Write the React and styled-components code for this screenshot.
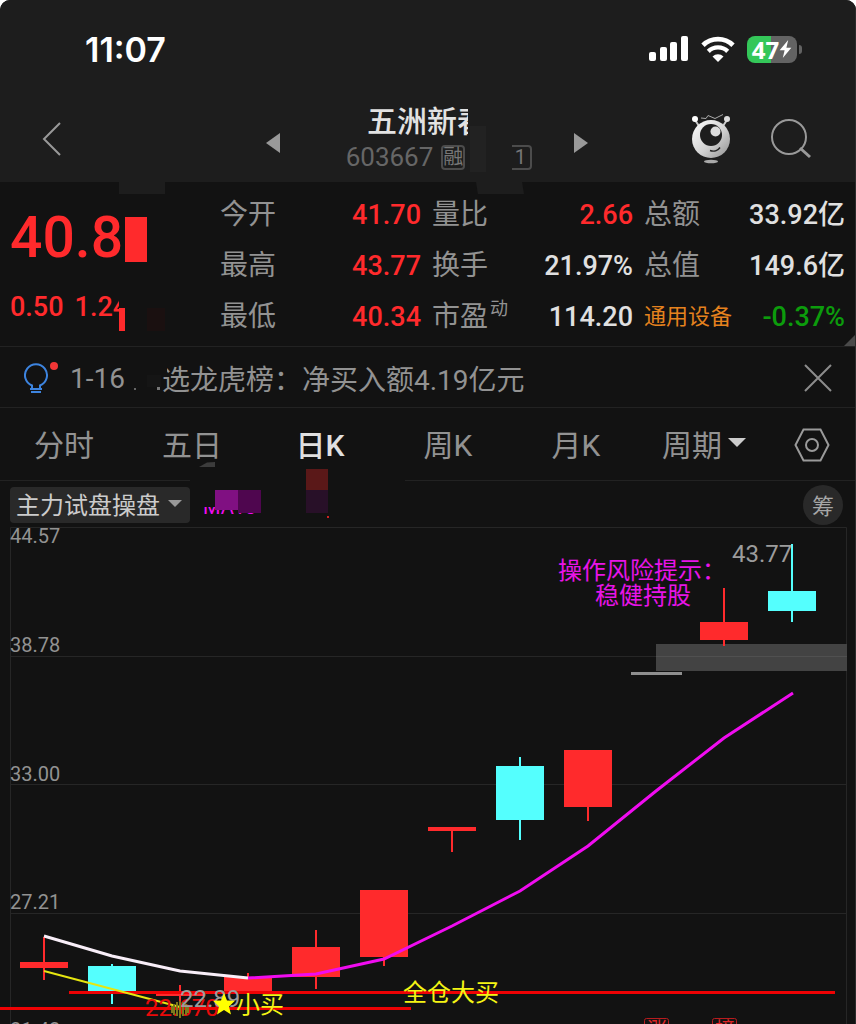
import styled, { createGlobalStyle } from "styled-components";

const QUOTES = [
  { label: "今开", value: "41.70", tone: "up" },
  { label: "量比", value: "2.66", tone: "up" },
  { label: "总额", value: "33.92亿" },
  { label: "最高", value: "43.77", tone: "up" },
  { label: "换手", value: "21.97%" },
  { label: "总值", value: "149.6亿" },
  { label: "最低", value: "40.34", tone: "up" },
  { label: "市盈", sup: "动", value: "114.20" },
  { label: "通用设备", value: "-0.37%", tone: "down", sector: true },
];

const TABS = ["分时", "五日", "日K", "周K", "月K"];

const RED = "#ff2a2c";
const CYAN = "#54fffe";

// x is the centre of the candle
const CANDLES = [
  { x: 44, high: 410, open: 435, close: 441, low: 453, color: RED },
  { x: 112, high: 437, open: 439, close: 464, low: 477, color: CYAN },
  { x: 180, high: 458, open: 466, close: 469, low: 475, color: RED },
  { x: 248, high: 446, open: 450, close: 465, low: 465, color: RED },
  { x: 316, high: 403, open: 420, close: 450, low: 462, color: RED },
  { x: 384, high: 363, open: 363, close: 430, low: 439, color: RED },
  { x: 452, high: 300, open: 300, close: 304, low: 325, color: RED },
  { x: 520, high: 230, open: 239, close: 293, low: 313, color: CYAN },
  { x: 588, high: 223, open: 223, close: 280, low: 294, color: RED },
  { x: 724, high: 61, open: 95, close: 113, low: 119, color: RED },
  { x: 792, high: 17, open: 64, close: 84, low: 95, color: CYAN },
];

const AXIS = [
  { y: 16, text: "44.57" },
  { y: 125, text: "38.78" },
  { y: 254, text: "33.00" },
  { y: 382, text: "27.21" },
  { y: 510, text: "21.42" },
];

const SignalIcon = () => (
  <svg width="40" height="26" viewBox="0 0 40 26" fill="#fff">
    <rect x="0" y="16" width="7" height="9" rx="2" />
    <rect x="11" y="11" width="7" height="14" rx="2" />
    <rect x="21" y="6" width="7" height="19" rx="2" />
    <rect x="32" y="0" width="7" height="25" rx="2" />
  </svg>
);

const WifiIcon = () => (
  <svg width="34" height="26" viewBox="0 0 34 26" fill="none" stroke="#fff">
    <path d="M2 9.200a21.500 21.500 0 0 1 30 0" strokeWidth="4.800" />
    <path d="M7.300 15.300a14 14 0 0 1 19.400 0" strokeWidth="4.400" />
    <path d="M17 26l-5.500-5.500a8 8 0 0 1 11 0z" fill="#fff" stroke="none" />
  </svg>
);

const BackIcon = () => (
  <svg width="20" height="34" viewBox="0 0 20 34" fill="none">
    <path d="M18 1L2 17l16 16" stroke="#999" strokeWidth="2" />
  </svg>
);

const RobotIcon = () => (
  <svg width="40" height="50" viewBox="0 0 40 50" fill="none">
    <defs>
      <linearGradient id="robotBody" x1="0" y1="0" x2="1" y2="1">
        <stop offset="0" stopColor="#fff" />
        <stop offset="0.55" stopColor="#d2d2d2" />
        <stop offset="1" stopColor="#8e8e8e" />
      </linearGradient>
    </defs>
    <path d="M4 6l4 6M36 6l-4 6" stroke="#ccc" strokeWidth="2" />
    <circle cx="4" cy="5" r="3" fill="#fff" />
    <circle cx="36" cy="5" r="3" fill="#ddd" />
    <path d="M10 4l5 .5 2-3 7 3 8-4" stroke="#aaa" />
    <circle cx="20" cy="25" r="19" fill="url(#robotBody)" />
    <circle cx="20" cy="21" r="11" fill="#1d1d1d" />
    <circle cx="24.500" cy="17.500" r="5" fill="#dcdcdc" />
    <path d="M19 36.500c4 1.500 8 0 10-3" stroke="#222" strokeWidth="1.500" />
    <ellipse cx="20" cy="47.500" rx="7" ry="1.800" fill="#aaa" />
  </svg>
);

const SearchIcon = () => (
  <svg width="42" height="42" viewBox="0 0 42 42" fill="none">
    <circle cx="19" cy="19" r="17" stroke="#999" strokeWidth="2" />
    <path d="M30 30l10 9" stroke="#999" strokeWidth="3" />
  </svg>
);

const BulbIcon = () => (
  <svg width="34" height="34" viewBox="0 0 34 34" fill="none">
    <path
      d="M8 27v-2.500a11 11 0 1 1 8 0V27"
      stroke="#3d84df"
      strokeWidth="2"
    />
    <path d="M6 28h12M7 31h10" stroke="#3d84df" strokeWidth="2" />
    <circle cx="30" cy="5" r="4" fill="#f23636" />
  </svg>
);

const CloseIcon = () => (
  <svg width="28" height="28" viewBox="0 0 28 28">
    <path d="M1 1l26 26M27 1L1 27" stroke="#8c8c8c" strokeWidth="2" />
  </svg>
);

const SettingsIcon = () => (
  <svg width="36" height="34" viewBox="0 0 36 34" fill="none">
    <path
      d="M9.500 1.500h17L34.500 17l-8 15.500h-17L1.500 17z"
      stroke="#9a9a9a"
      strokeWidth="2"
    />
    <circle cx="18" cy="17" r="6" stroke="#9a9a9a" strokeWidth="2" />
  </svg>
);

const Candle = ({ x, high, open, close, low, color }) => (
  <g fill={color}>
    <rect x={x - 1} y={high} width="2" height={low - high} />
    <rect x={x - 24} y={open} width="48" height={close - open} />
  </g>
);

const StarGlyph = ({ x, y }) => (
  <path
    transform={`translate(${x} ${y})`}
    d="M0-11L3-3.500 11-3.200 5 2.500 7 10.500 0 6-7 10.500-5 2.500-11-3.200-3-3.500z"
    fill="#ff0"
  />
);

const Chart = () => (
  <ChartSvg viewBox="0 0 856 497" role="img" aria-label="日K">
    <g stroke="#262626" fill="none">
      <path d="M10.500 497V.5h836V497" />
      <path d="M10 129.500h837M10 257.500h837M10 386.500h837" />
    </g>
    {AXIS.map(({ y, text }) => (
      <AxisText key={text} x="10" y={y}>
        {text}
      </AxisText>
    ))}

    <rect x="656" y="117" width="191" height="27" fill="#434343" />
    <path d="M656 129.500h191" stroke="#505050" />
    <rect x="631" y="145" width="51" height="3" fill="#8f8f8f" />
    {CANDLES.map((candle) => (
      <Candle key={candle.x} {...candle} />
    ))}

    <path d="M69 465.500h766M0 481.500h411" stroke="#ee0204" strokeWidth="3" />
    <path d="M44 444l68 18 68 18" stroke="#e6e610" strokeWidth="2" fill="none" />
    <path
      d="M44 409l68 20 68 15 68 7"
      stroke="#f8eef8"
      strokeWidth="3"
      fill="none"
    />
    <path
      d="M248 451l68-4 68-15 68-33 68-35 68-45 68-55 68-53 69-45"
      stroke="#f00cf0"
      strokeWidth="3"
      fill="none"
    />

    <ChartText x="145" y="489" $color="#e80a0a">22.670</ChartText>
    <path
      d="M172 479v7M174 477v11M177 475v14M180 474v17M183 475v14M186 477v11M188 479v7"
      stroke="#7d7a1c"
      strokeWidth="2"
    />
    <ChartText x="180" y="480" $color="#9c9c9c">22.89</ChartText>
    <StarGlyph x={224} y={477} />
    <ChartText x="236" y="486" $color="#f4f414">小买</ChartText>
    <ChartText x="403" y="474" $color="#f4f414">全仓大买</ChartText>
    <ChartText x="558" y="52" $color="#e814e8">操作风险提示：</ChartText>
    <ChartText x="595" y="77" $color="#e814e8">稳健持股</ChartText>
    <ChartText x="732" y="35" $color="#9c9c9c">43.77</ChartText>

    <g fill="none" stroke="#b81c1e">
      <rect x="644.500" y="491.500" width="24" height="24" rx="2" />
      <rect x="712.500" y="491.500" width="24" height="24" rx="2" />
    </g>
    <MarkText x="647" y="510">涨</MarkText>
    <MarkText x="715" y="510">榜</MarkText>
  </ChartSvg>
);

const App = () => {
  return (
    <>
      <GlobalStyle />
      <Page>
        <StatusBar>
          <Clock>11:07</Clock>
          <StatusIcons>
            <SignalIcon />
            <WifiIcon />
            <Battery>
              <BatteryLevel>
                47
                <svg width="13" height="18" viewBox="0 0 13 20">
                  <path d="M9.500 0L0 11.500h5.500L3.500 20 13 8.500H7.500z" fill="#fff" />
                </svg>
              </BatteryLevel>
              <BatteryTip />
            </Battery>
          </StatusIcons>
        </StatusBar>

        <Header>
          <HeaderSide>
            <IconButton aria-label="返回">
              <BackIcon />
            </IconButton>
          </HeaderSide>
          <Switcher>
            <StepButton aria-label="上一只">
              <svg width="14" height="20" viewBox="0 0 14 20">
                <path d="M14 0v20L0 10z" fill="#999" />
              </svg>
            </StepButton>
            <Stock>
              <StockName>五洲新春</StockName>
              <StockCode>
                603667
                <Badge>融</Badge>
                <Badge $last>1</Badge>
              </StockCode>
              <Patch $x={188} $y={0} $w={24} $h={34} $color="#1d1d1d" />
              <Patch $x={190} $y={22} $w={16} $h={46} $color="#222" />
              <Patch $x={226} $y={38} $w={6} $h={32} $color="#1d1d1d" />
            </Stock>
            <StepButton aria-label="下一只">
              <svg width="14" height="20" viewBox="0 0 14 20">
                <path d="M0 0v20l14-10z" fill="#999" />
              </svg>
            </StepButton>
          </Switcher>
          <HeaderSide $end>
            <IconButton aria-label="助手">
              <RobotIcon />
            </IconButton>
            <IconButton aria-label="搜索">
              <SearchIcon />
            </IconButton>
          </HeaderSide>
        </Header>

        <Quote>
          <PriceBlock>
            <Price>40.8</Price>
            <Change>
              <span>0.50</span>
              <span>1.24</span>
            </Change>
          </PriceBlock>
          <Figures>
            {QUOTES.map(({ label, sup, value, tone, sector }) => (
              <Figure key={label}>
                <FigureLabel $sector={sector}>
                  {label}
                  {sup && <sup>{sup}</sup>}
                </FigureLabel>
                <FigureValue $tone={tone}>{value}</FigureValue>
              </Figure>
            ))}
          </Figures>
          <Patch $x={119} $y={0} $w={46} $h={12} $color="#1d1d1d" />
          <Patch $x={476} $y={0} $w={48} $h={12} $color="#1d1d1d" $slanted />
          <Patch $x={119} $y={110} $w={28} $h={40} $color="#121212" />
          <Patch $x={125} $y={35} $w={22} $h={45} $color={RED} />
          <Patch $x={119} $y={126} $w={6} $h={23} $color={RED} />
          <Patch $x={147} $y={126} $w={18} $h={23} $color="#1a1010" />
          <Corner />
        </Quote>

        <Notice>
          <BulbIcon />
          <NoticeDate>1-16</NoticeDate>
          <NoticeText>选龙虎榜：净买入额4.19亿元</NoticeText>
          <IconButton aria-label="关闭">
            <CloseIcon />
          </IconButton>
          <Patch $x={155} $y={8} $w={12} $h={18} $color="#121212" />
          <Patch $x={147} $y={28} $w={14} $h={12} $color="#151515" />
          <Patch $x={134} $y={41} $w={2} $h={2} $color="#666" />
          <Patch $x={157} $y={40} $w={3} $h={3} $color="#777" />
        </Notice>

        <Tabs>
          {TABS.map((tab) => (
            <Tab key={tab} $active={tab === "日K"}>
              {tab}
            </Tab>
          ))}
          <Tab>
            周期
            <Caret $color="#ccc" $size={9} />
          </Tab>
          <SettingsTab aria-label="设置">
            <SettingsIcon />
          </SettingsTab>
          <Patch $x={190} $y={71} $w={215} $h={3} $color="#121212" />
          <Patch $x={199} $y={54} $w={16} $h={5} $color="#3c3c3c" $sloped />
          <Patch $x={306} $y={61} $w={22} $h={21} $color="#5a1818" />
        </Tabs>

        <Indicator>
          <IndicatorButton>
            主力试盘操盘
            <Caret $color="#999" $size={7} />
          </IndicatorButton>
          <Average>MA10</Average>
          <ChipButton>筹</ChipButton>
          <Patch $x={200} $y={4} $w={64} $h={22} $color="#121212" />
          <Patch $x={215} $y={9} $w={23} $h={20} $color="#801082" />
          <Patch $x={238} $y={9} $w={23} $h={23} $color="#4f064f" />
          <Patch $x={306} $y={9} $w={22} $h={23} $color="#281028" />
          <Patch $x={327} $y={35} $w={2} $h={2} $color="#c22" />
        </Indicator>

        <Chart />
      </Page>
    </>
  );
};

export default App;

const GlobalStyle = createGlobalStyle`
  * {
    box-sizing: border-box;
  }

  body {
    margin: 0;
    background: #fff;
    font-family: Roboto, "Noto Sans CJK SC", sans-serif;
  }

  button {
    display: flex;
    padding: 0;
    border: none;
    background: none;
    color: inherit;
    font: inherit;
    cursor: pointer;
  }

  svg {
    display: block;
    flex-shrink: 0;
  }
`;

const Page = styled.main`
  position: relative;
  min-height: 100vh;
  overflow: hidden;
  border-radius: 10px 10px 0 0;
  background: #121212;
  color: #999;

  &::after {
    content: "";
    position: absolute;
    top: 0;
    right: 0;
    bottom: 0;
    width: 1px;
    background: #2c2c2c;
  }
`;

const StatusBar = styled.div`
  display: flex;
  align-items: center;
  justify-content: space-between;
  height: 96px;
  padding: 2px 54px 0 85px;
  background: #1d1d1d;
  color: #fff;
`;

const Clock = styled.time`
  font-family: Inter, sans-serif;
  font-size: 34px;
  font-weight: 600;
`;

const StatusIcons = styled.div`
  display: flex;
  align-items: center;
  gap: 12px;
`;

const Battery = styled.div`
  display: flex;
  align-items: center;
  gap: 2px;
`;

const BatteryLevel = styled.div`
  display: flex;
  align-items: center;
  justify-content: center;
  width: 50px;
  height: 27px;
  border-radius: 8px;
  background: linear-gradient(90deg, #34c759 47%, #636363 47%);
  font-family: "Open Sans", sans-serif;
  font-size: 24px;
  font-weight: 700;
`;

const BatteryTip = styled.span`
  width: 3px;
  height: 9px;
  border-radius: 0 4px 4px 0;
  background: #636363;
`;

const Header = styled.header`
  display: grid;
  grid-template-columns: 1fr auto 1fr;
  align-items: center;
  height: 86px;
  padding: 0 44px 0 42px;
  background: #1d1d1d;
`;

const HeaderSide = styled.div`
  display: flex;
  align-items: center;
  justify-content: ${({ $end }) => ($end ? "flex-end" : "flex-start")};
  gap: 39px;
`;

const IconButton = styled.button`
  align-items: center;
`;

const Switcher = styled.div`
  display: flex;
  align-items: center;
`;

const StepButton = styled.button`
  && {
    padding-top: 8px;
  }
`;

const Stock = styled.div`
  position: relative;
  width: 294px;
`;

const StockName = styled.h1`
  margin: 0;
  color: #e2e2e2;
  font-size: 30px;
  font-weight: 500;
  line-height: 36px;
  text-align: center;
`;

const StockCode = styled.div`
  display: flex;
  align-items: center;
  justify-content: center;
  gap: 8px;
  padding-left: 24px;
  color: #666;
  font-size: 26px;
  line-height: 34px;
`;

const Badge = styled.span`
  width: 24px;
  margin-left: ${({ $last }) => ($last ? "35px" : "0")};
  border: 2px solid #4c4c4c;
  border-radius: 4px;
  color: #777;
  font-size: 20px;
  line-height: 21px;
  text-align: center;
`;

const Patch = styled.span`
  position: absolute;
  left: ${({ $x }) => $x}px;
  top: ${({ $y }) => $y}px;
  width: ${({ $w }) => $w}px;
  height: ${({ $h }) => $h}px;
  background: ${({ $color }) => $color};
  clip-path: ${({ $slanted, $sloped }) =>
    $slanted
      ? "polygon(0 0, 96% 0, 100% 100%, 4% 100%)"
      : $sloped
        ? "polygon(0 100%, 50% 10%, 100% 0, 100% 100%)"
        : "none"};
`;

const Quote = styled.section`
  position: relative;
  display: flex;
  padding: 7px 11px 4px 10px;
  border-bottom: 1px solid #222;
`;

const PriceBlock = styled.div`
  width: 210px;
  color: ${RED};
`;

const Price = styled.div`
  font-size: 57px;
  font-weight: 500;
  line-height: 98px;
`;

const Change = styled.div`
  display: flex;
  gap: 11px;
  font-size: 27px;
  font-weight: 500;
  line-height: 40px;
`;

const Figures = styled.dl`
  display: grid;
  flex: 1;
  grid-template-columns: repeat(3, 1fr);
  column-gap: 11px;
  margin: 0;
`;

const Figure = styled.div`
  display: flex;
  align-items: center;
  justify-content: space-between;
  height: 51px;
`;

const FigureLabel = styled.dt`
  color: ${({ $sector }) => ($sector ? "#e5821e" : "#929292")};
  font-size: ${({ $sector }) => ($sector ? "22px" : "28px")};
  line-height: 40px;
  white-space: nowrap;

  sup {
    margin-left: 2px;
    font-size: 18px;
    line-height: 0;
  }
`;

const TONES = { up: RED, down: "#0c9c0c" };

const FigureValue = styled.dd`
  margin: 0;
  color: ${({ $tone }) => TONES[$tone] || "#e0e0e0"};
  font-size: 27px;
  font-weight: 500;
  line-height: 40px;
  white-space: nowrap;
`;

const Corner = styled.span`
  position: absolute;
  right: 0;
  bottom: 0;
  border: 6px solid #4a4a4a;
  border-top-color: transparent;
  border-left-color: transparent;
`;

const Notice = styled.section`
  position: relative;
  display: flex;
  align-items: center;
  height: 61px;
  padding: 2px 24px 0;
  border-bottom: 1px solid #222;
  color: #929292;
  font-size: 28px;
`;

const NoticeDate = styled.time`
  width: 104px;
  padding-left: 12px;
`;

const NoticeText = styled.span`
  flex: 1;
`;

const Tabs = styled.nav`
  position: relative;
  display: grid;
  grid-template-columns: repeat(6, 1fr) 88px;
  height: 73px;
  border-bottom: 1px solid #222;
`;

const Tab = styled.button`
  && {
    align-items: center;
    justify-content: center;
    gap: 6px;
    padding-bottom: 3px;
    color: ${({ $active }) => ($active ? "#e0e0e0" : "#929292")};
    font-size: 30px;
    font-weight: ${({ $active }) => ($active ? 500 : 400)};
  }
`;

const SettingsTab = styled.button`
  && {
    align-items: center;
    justify-content: center;
    padding-top: 2px;
  }
`;

const Caret = styled.span`
  border: ${({ $size }) => $size}px solid transparent;
  border-top-color: ${({ $color }) => $color};
  border-bottom: none;
`;

const Indicator = styled.section`
  position: relative;
  display: flex;
  align-items: center;
  height: 46px;
  padding: 2px 13px 0 10px;
`;

const IndicatorButton = styled.button`
  && {
    align-items: center;
    gap: 8px;
    height: 36px;
    padding: 0 8px 3px 6px;
    border-radius: 4px;
    background: #292929;
    color: #ccc;
    font-size: 24px;
  }
`;

const Average = styled.span`
  flex: 1;
  padding: 4px 0 0 13px;
  color: #f00cf0;
  font-size: 20px;
`;

const ChipButton = styled.button`
  && {
    align-items: center;
    justify-content: center;
    width: 40px;
    height: 40px;
    padding-bottom: 3px;
    border-radius: 50%;
    background: #292929;
    color: #a6a6a6;
    font-size: 22px;
  }
`;

const ChartSvg = styled.svg`
  width: 100%;
`;

const AxisText = styled.text`
  fill: #929292;
  font-size: 20px;
`;

const ChartText = styled.text`
  fill: ${({ $color }) => $color};
  font-size: 24px;
`;

const MarkText = styled.text`
  fill: #e02426;
  font-size: 20px;
`;
